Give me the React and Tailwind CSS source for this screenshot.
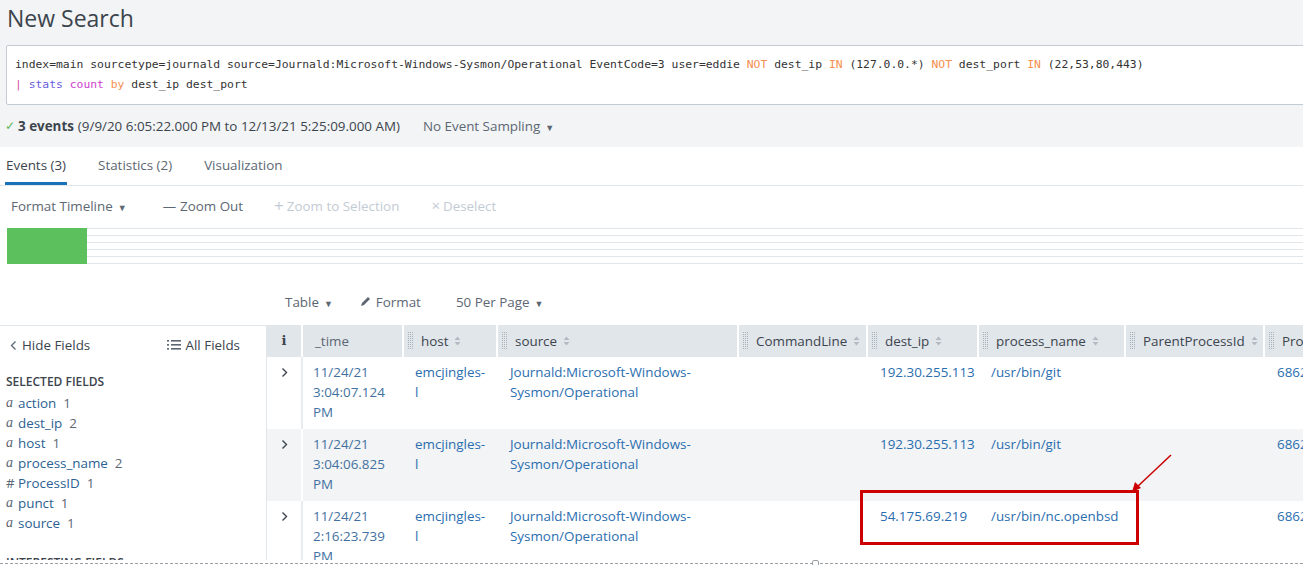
import React from 'react';

const cols = [
  { key: 'i', w: 'w-[36px]' },
  { key: '_time', w: 'w-[101px]', label: '_time' },
  { key: 'host', w: 'w-[94px]', label: 'host', grip: true, sort: true },
  { key: 'source', w: 'w-[241px]', label: 'source', grip: true, sort: true },
  { key: 'cmd', w: 'w-[129px]', label: 'CommandLine', grip: true, sort: true },
  { key: 'dest', w: 'w-[111px]', label: 'dest_ip', grip: true, sort: true },
  { key: 'proc', w: 'w-[147px]', label: 'process_name', grip: true, sort: true },
  { key: 'ppid', w: 'w-[139px]', label: 'ParentProcessId', grip: true, sort: true },
  { key: 'pro', w: 'w-[140px]', label: 'ProcessId', grip: true, sort: true },
];

const rows = [
  { time: ['11/24/21', '3:04:07.124', 'PM'], dest: '192.30.255.113', proc: '/usr/bin/git' },
  { time: ['11/24/21', '3:04:06.825', 'PM'], dest: '192.30.255.113', proc: '/usr/bin/git', alt: true },
  { time: ['11/24/21', '2:16:23.739', 'PM'], dest: '54.175.69.219', proc: '/usr/bin/nc.openbsd' },
];

const fields = [
  { t: 'a', name: 'action', n: 1 },
  { t: 'a', name: 'dest_ip', n: 2 },
  { t: 'a', name: 'host', n: 1 },
  { t: 'a', name: 'process_name', n: 2 },
  { t: '#', name: 'ProcessID', n: 1 },
  { t: 'a', name: 'punct', n: 1 },
  { t: 'a', name: 'source', n: 1 },
];

function Grip() {
  const dots = [];
  for (let x = 0; x < 6; x += 2) {
    for (let y = 0; y < 18; y += 2) {
      dots.push(<rect key={`${x}-${y}`} x={x} y={y} width="1" height="1" fill="#a9b1ba" />);
    }
  }
  return (
    <svg width="5" height="18" viewBox="0 0 5 18" className="shrink-0">
      {dots}
    </svg>
  );
}

function Sort() {
  return (
    <svg width="7" height="10" viewBox="0 0 7 10" className="shrink-0 ml-[6px]">
      <path d="M3.5 0.5 L6.5 4 H0.5Z" fill="#b3bac2" />
      <path d="M0.5 6 H6.5 L3.5 9.5Z" fill="#b3bac2" />
    </svg>
  );
}

function Caret() {
  return <span className="ml-[5px] text-[9px] align-middle">▼</span>;
}

function Chevron() {
  return (
    <svg width="7" height="11" viewBox="0 0 7 11">
      <path d="M1.5 1.5 L5.5 5.5 L1.5 9.5" fill="none" stroke="#3c444d" strokeWidth="1.4" />
    </svg>
  );
}

function Lines({ items }) {
  return items.map((l, i) => <div key={i}>{l}</div>);
}

export default function App() {
  return (
    <div className="relative w-[1303px] h-[565px] overflow-hidden bg-white font-['Open_Sans',sans-serif] text-[13.4px] text-[#3c444d]">
      {/* search header */}
      <div className="h-[147px] bg-[#f2f4f5]">
        <div className="pl-[7px] h-[36px] leading-[36px] text-[23px] font-medium text-[#3c444d]">New Search</div>
        <div className="ml-[6px] mt-[9px] w-[1320px] h-[60px] bg-white border border-[#c3cbd4] rounded-[2px] pl-[8px] pt-[8px] font-['DejaVu_Sans_Mono',monospace] text-[11.36px] leading-[20px] text-[#333] whitespace-nowrap">
          <div>
            index=main sourcetype=journald source=Journald:Microsoft-Windows-Sysmon/Operational EventCode=3 user=eddie{' '}
            <span className="text-[#f5904f]">NOT</span> dest_ip <span className="text-[#f5904f]">IN</span> (127.0.0.*){' '}
            <span className="text-[#f5904f]">NOT</span> dest_port <span className="text-[#f5904f]">IN</span> (22,53,80,443)
          </div>
          <div>
            <span className="text-[#d94fa0]">|</span> <span className="text-[#6a5be0]">stats</span>{' '}
            <span className="text-[#cc3fcf]">count</span> <span className="text-[#f5904f]">by</span> dest_ip dest_port
          </div>
        </div>
        <div className="h-[42px] flex items-center pl-[5px] whitespace-nowrap">
          <span className="text-[#5cb85c] text-[12px] mr-[3px]">✓</span>
          <span className="font-bold">3 events</span>
          <span className="ml-[4px]">(9/9/20 6:05:22.000 PM to 12/13/21 5:25:09.000 AM)</span>
          <span className="ml-[23px] text-[#5c6773]">
            No Event Sampling
            <Caret />
          </span>
        </div>
      </div>

      {/* tabs */}
      <div className="h-[39px] border-b border-[#e1e6eb] flex pl-[5px]">
        <div className="h-[38px] pt-[8px] leading-[20px] border-b-[3px] border-[#1a73b8] px-[1px] text-[#3c444d]">Events (3)</div>
        <div className="h-[38px] pt-[8px] leading-[20px] ml-[31px] text-[#5c6773]">Statistics (2)</div>
        <div className="h-[38px] pt-[8px] leading-[20px] ml-[32px] text-[#5c6773]">Visualization</div>
      </div>

      {/* timeline toolbar */}
      <div className="h-[40px] flex items-center pl-[11px] whitespace-nowrap">
        <span className="text-[#5c6773]">
          Format Timeline
          <Caret />
        </span>
        <span className="ml-[36px] text-[#5c6773]">
          <span className="mr-[4px]">—</span>Zoom Out
        </span>
        <span className="ml-[31px] text-[#c3cbd4] flex items-center">
          <span className="mr-[3px] text-[17px] leading-[17px]">+</span>Zoom to Selection
        </span>
        <span className="ml-[32px] text-[#c3cbd4] flex items-center">
          <span className="mr-[3px] text-[15px] leading-[15px]">×</span>Deselect
        </span>
      </div>

      {/* timeline chart */}
      <div className="mt-[2px] h-[36px] flex pl-[7px]">
        <div className="w-[80px] h-[36px] bg-[#5cc05c]" />
        <div className="flex-1 h-[36px] flex flex-col justify-between">
          {[0, 1, 2, 3, 4, 5].map((i) => (
            <div key={i} className="h-px bg-[#e1e6eb]" />
          ))}
        </div>
      </div>

      {/* table toolbar */}
      <div className="h-[61px] pt-[15px] flex items-center pl-[285px] text-[#5c6773] whitespace-nowrap">
        <span>
          Table
          <Caret />
        </span>
        <span className="ml-[27px] flex items-center">
          <svg width="11" height="11" viewBox="0 0 11 11" className="mr-[5px]">
            <path d="M1 10 L2 7 L8 1 L10 3 L4 9Z" fill="#5c6773" />
          </svg>
          Format
        </span>
        <span className="ml-[35px]">
          50 Per Page
          <Caret />
        </span>
      </div>

      {/* main */}
      <div className="h-[235px] flex overflow-hidden">
        <div className="w-[267px] shrink-0 border-t border-r border-[#e1e6eb]">
          <div className="h-[39px] flex items-center justify-between pl-[10px] pr-[26px]">
            <span className="flex items-center">
              <svg width="7" height="11" viewBox="0 0 7 11" className="mr-[5px]">
                <path d="M5.5 1.5 L1.5 5.5 L5.5 9.5" fill="none" stroke="#5c6773" strokeWidth="1.3" />
              </svg>
              Hide Fields
            </span>
            <span className="flex items-center">
              <svg width="14" height="10" viewBox="0 0 14 10" className="mr-[5px]">
                <rect x="0" y="0" width="2" height="1.6" fill="#5c6773" />
                <rect x="0" y="4" width="2" height="1.6" fill="#5c6773" />
                <rect x="0" y="8" width="2" height="1.6" fill="#5c6773" />
                <rect x="4" y="0" width="10" height="1.6" fill="#5c6773" />
                <rect x="4" y="4" width="10" height="1.6" fill="#5c6773" />
                <rect x="4" y="8" width="10" height="1.6" fill="#5c6773" />
              </svg>
              All Fields
            </span>
          </div>
          <div className="pl-[6px] mt-[7px] leading-[20px] text-[12px] font-semibold text-[#3c444d]">SELECTED FIELDS</div>
          <div className="pl-[6px] mt-[1px]">
            {fields.map((f) => (
              <div key={f.name} className="h-[20px] leading-[20px] flex items-center whitespace-nowrap">
                {f.t === 'a' ? (
                  <span className="w-[12px] font-['Liberation_Serif',serif] italic text-[14px] text-[#5c6773]">a</span>
                ) : (
                  <span className="w-[12px] text-[#5c6773]">#</span>
                )}
                <span className="text-[#2c5f92]">{f.name}</span>
                <span className="ml-[7px] text-[#5c6773]">{f.n}</span>
              </div>
            ))}
          </div>
          <div className="pl-[6px] mt-[20px] leading-[20px] text-[12px] font-semibold text-[#3c444d]">INTERESTING FIELDS</div>
        </div>

        <div className="flex-1 min-w-0 overflow-hidden">
          <div className="w-[1140px]">
            <div className="flex h-[32px] bg-[#e1e6eb]">
              {cols.map((c) => (
                <div key={c.key} className={`${c.w} shrink-0 h-full border-r-2 border-white flex items-center whitespace-nowrap`}>
                  {c.key === 'i' ? (
                    <span className="w-full text-center font-['DejaVu_Serif',serif] font-bold text-[13px] text-[#3c444d]">i</span>
                  ) : c.grip ? (
                    <>
                      <span className="ml-[4px]">
                        <Grip />
                      </span>
                      <span className="ml-[8px] text-[#3c444d]">{c.label}</span>
                      <Sort />
                    </>
                  ) : (
                    <span className="ml-[12px] text-[#5c6773]">{c.label}</span>
                  )}
                </div>
              ))}
            </div>
            {rows.map((r, idx) => (
              <div key={idx} className={`flex h-[72px] ${r.alt ? 'bg-[#f2f4f5]' : 'bg-white'} leading-[20px]`}>
                <div className={`w-[36px] shrink-0 border-r-2 ${r.alt ? 'border-white' : 'border-[#e9ecef]'} flex justify-center pt-[10px]`}>
                  <Chevron />
                </div>
                <div className="w-[101px] shrink-0 pl-[10px] pt-[5px] text-[#43719f]">
                  <Lines items={r.time} />
                </div>
                <div className="w-[94px] shrink-0 pl-[11px] pt-[5px] text-[#2a6eb0]">
                  <Lines items={['emcjingles-', 'l']} />
                </div>
                <div className="w-[241px] shrink-0 pl-[12px] pt-[5px] text-[#2a6eb0]">
                  <Lines items={['Journald:Microsoft-Windows-', 'Sysmon/Operational']} />
                </div>
                <div className="w-[129px] shrink-0" />
                <div className="w-[111px] shrink-0 pl-[12px] pt-[5px] text-[#2a6eb0]">{r.dest}</div>
                <div className="w-[147px] shrink-0 pl-[12px] pt-[5px] text-[#2a6eb0]">{r.proc}</div>
                <div className="w-[139px] shrink-0" />
                <div className="w-[140px] shrink-0 pl-[12px] pt-[5px] text-[#2a6eb0]">68621</div>
              </div>
            ))}
          </div>
        </div>
      </div>

      {/* bottom dashed edge */}
      <div className="mt-[3px] border-t border-dashed border-[#9aa0a6]" />
      <div className="absolute left-[812px] top-[560px] w-[7px] h-[7px] rounded-[2px] border border-[#9aa0a6] bg-white" />

      {/* annotation */}
      <div className="absolute left-[860px] top-[490px] w-[279px] h-[55px] border-[3px] border-[#cc0000]" />
      <svg className="absolute left-[1125px] top-[450px]" width="55" height="48" viewBox="0 0 55 48">
        <line x1="46" y1="5" x2="11" y2="38" stroke="#cc0000" strokeWidth="1.5" />
        <path d="M7 42 L10 32 L16 38Z" fill="#cc0000" />
      </svg>
    </div>
  );
}
